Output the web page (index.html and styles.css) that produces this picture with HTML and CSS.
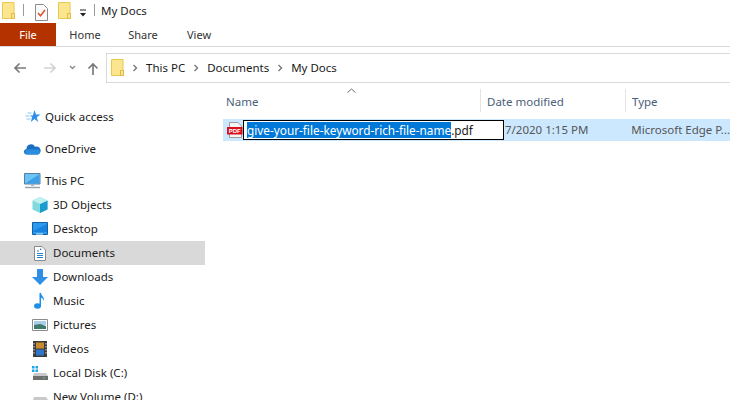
FILE: index.html
```html
<!DOCTYPE html>
<html lang="en">
<head>
<meta charset="utf-8">
<title>My Docs</title>
<link rel="stylesheet" href="styles.css">
</head>
<body>
<svg class="defs" width="0" height="0" aria-hidden="true">
  <symbol id="folder" viewBox="0 0 13 17">
    <path d="M.5.5h11.5v16H.5z" fill="#fbe58f" stroke="#e9c84f"/>
    <path d="M9.5 11.5h3v5h-3z" fill="#fbe58f" stroke="#e0b93e"/>
  </symbol>
  <symbol id="chev" viewBox="0 0 6 8">
    <path d="M1.5 1l3 3-3 3" fill="none" stroke="#777" stroke-width="1.4"/>
  </symbol>
</svg>
<div class="window">
  <header class="titlebar">
    <svg class="qat-folder" width="13" height="17"><use href="#folder"/></svg>
    <span class="qat-sep"></span>
    <svg class="qat-check" width="13" height="17" viewBox="0 0 13 17">
      <path d="M.5.5h8l4 4v12H.5z" fill="#fafafa" stroke="#8b8b8b"/>
      <path d="M3 9l2.500 2.800L10 6" fill="none" stroke="#d9542b" stroke-width="1.500"/>
    </svg>
    <svg class="qat-folder2" width="13" height="17"><use href="#folder"/></svg>
    <svg class="qat-drop" width="8" height="8" viewBox="0 0 8 8">
      <path d="M1 1h6" stroke="#222" stroke-width="1"/>
      <path d="M1 4h6L4 7.500z" fill="#222"/>
    </svg>
    <span class="qat-sep sep2"></span>
    <span class="title">My Docs</span>
  </header>
  <nav class="ribbon">
    <span class="tab file">File</span>
    <span class="tab home">Home</span>
    <span class="tab share">Share</span>
    <span class="tab view">View</span>
  </nav>
  <div class="addressrow">
    <svg class="back" width="14" height="12" viewBox="0 0 14 12"><path d="M13 6H2M6.500 1.500 2 6l4.500 4.500" fill="none" stroke="#7a7a7a" stroke-width="1.700"/></svg>
    <svg class="fwd" width="14" height="12" viewBox="0 0 14 12"><path d="M1 6h11M7.500 1.500 12 6l-4.500 4.500" fill="none" stroke="#d2d2d2" stroke-width="1.700"/></svg>
    <svg class="nav-down" width="7" height="5" viewBox="0 0 7 5"><path d="M1 1l2.500 2.500L6 1" fill="none" stroke="#8a8a8a" stroke-width="1.300"/></svg>
    <svg class="up" width="12" height="14" viewBox="0 0 12 14"><path d="M6 13V2M1.500 6.500 6 2l4.500 4.500" fill="none" stroke="#7a7a7a" stroke-width="1.700"/></svg>
    <div class="addressbox">
      <svg width="13" height="17"><use href="#folder"/></svg>
      <svg class="crumb-chev" width="6" height="8"><use href="#chev"/></svg>
      <span>This PC</span>
      <svg class="crumb-chev" width="6" height="8"><use href="#chev"/></svg>
      <span>Documents</span>
      <svg class="crumb-chev" width="6" height="8"><use href="#chev"/></svg>
      <span>My Docs</span>
    </div>
  </div>
  <div class="body">
    <aside class="sidebar">
      <ul class="tree">
        <li class="item top gap-after">
          <svg width="16" height="16" viewBox="0 0 16 16"><path d="M10 1l1.500 4.500H16l-3.700 2.800 1.400 4.700-3.700-2.900L6.300 13l1.300-4.700L5.500 6.500h2.800z" fill="#2f8fe6"/><path d="M3 4h4M1 7h4M2 10h4" stroke="#8cc4f2" stroke-width="1"/></svg>
          <span>Quick access</span>
        </li>
        <li class="item top gap-after">
          <svg width="17" height="12" viewBox="0 0 17 12"><path d="M3 11.500A2.700 2.700 0 0 1 2.500 6 4.500 4.500 0 0 1 11 3.800 3.800 3.800 0 0 1 14 11.500z" fill="#1a6fc4"/><path d="M3 11.500A2.700 2.700 0 0 1 3 6.500h9.500a2.500 2.500 0 0 1 1.500 5z" fill="#2b8fe0"/></svg>
          <span>OneDrive</span>
        </li>
        <li class="item top">
          <svg width="17" height="16" viewBox="0 0 17 16"><path d="M.5.500h15.500v10.500H.5z" fill="#6cc4f5" stroke="#5a7f9c"/><path d="M1 10.500 15 1.500v9z" fill="#3ba0e6"/><path d="M7 11h3v2H7z" fill="#aab4bc"/><path d="M1 14.500h15" stroke="#9aa4ac" stroke-width="1.500"/></svg>
          <span>This PC</span>
        </li>
        <li class="item sub">
          <svg width="16" height="16" viewBox="0 0 16 16"><path d="M8 0l7.500 3.500v9L8 16 .5 12.500v-9z" fill="#7fd9de"/><path d="M8 7v9l7.500-3.500v-9z" fill="#1d9bcf"/><path d="M8 0l7.500 3.500L8 7 .5 3.500z" fill="#bff0ef"/></svg>
          <span>3D Objects</span>
        </li>
        <li class="item sub">
          <svg width="16" height="14" viewBox="0 0 16 14"><path d="M.5.500h15v12H.5z" fill="#2a9af0" stroke="#155f9e"/><path d="M1 9l14-7v8H1z" fill="#1682e0"/><path d="M4 12h7" stroke="#dbeeff"/></svg>
          <span>Desktop</span>
        </li>
        <li class="item sub selected">
          <svg width="16" height="15" viewBox="0 0 16 15"><path d="M2.500.500h7.500l3.500 3.500v10.500h-11z" fill="#fff" stroke="#8a8a8a"/><path d="M5 5h2M5 7.500h6M5 9.500h6M5 11.500h6" stroke="#2a7fd0"/><path d="M8 2l2 2H8z" fill="#2a7fd0"/></svg>
          <span>Documents</span>
        </li>
        <li class="item sub">
          <svg width="16" height="16" viewBox="0 0 16 16"><path d="M5 0h6v8h5l-8 8-8-8h5z" fill="#2f8fe6"/></svg>
          <span>Downloads</span>
        </li>
        <li class="item sub">
          <svg width="16" height="16" viewBox="0 0 16 16"><ellipse cx="5.500" cy="13" rx="3.500" ry="2.700" fill="#1e8fe8"/><path d="M7.500 13V0h1.500c.5 3 3.500 4 3 8-.7-2-2-3-3-3.200V13z" fill="#1e8fe8"/></svg>
          <span>Music</span>
        </li>
        <li class="item sub">
          <svg width="16" height="12" viewBox="0 0 16 12"><path d="M.5.500h15v11H.5z" fill="#fff" stroke="#8c8c8c"/><path d="M2 2h12v4H2z" fill="#a9cdea"/><path d="M2 6l6-1 6 2v3H2z" fill="#3e7a6a"/></svg>
          <span>Pictures</span>
        </li>
        <li class="item sub">
          <svg width="14" height="16" viewBox="0 0 14 16"><path d="M0 0h14v16H0z" fill="#3c3c3c"/><path d="M3 1.500h8v6H3z" fill="#c98c2c"/><path d="M3 8.500h8v6H3z" fill="#2f76c8"/><path d="M1 2v12M13 2v12" stroke="#d8d8d8" stroke-width="1" stroke-dasharray="1.500 1.500"/></svg>
          <span>Videos</span>
        </li>
        <li class="item sub">
          <svg width="16" height="14" viewBox="0 0 16 14"><path d="M0 0h2.500v2.500H0zM3.500 0H6v2.500H3.500zM0 3.500h2.500V6H0zM3.500 3.500H6V6H3.500z" fill="#19a7e8"/><path d="M2 7h12l2 3H1z" fill="#c9c9c9"/><path d="M1 10h15v4H1z" fill="#6e6e6e"/><path d="M11 11.500h2v1h-2z" fill="#4fd06f"/></svg>
          <span>Local Disk (C:)</span>
        </li>
        <li class="item sub">
          <svg width="16" height="14" viewBox="0 0 16 14"><path d="M2 7h12l2 3H1z" fill="#c9c9c9"/><path d="M1 10h15v4H1z" fill="#6e6e6e"/></svg>
          <span>New Volume (D:)</span>
        </li>
      </ul>
    </aside>
    <main class="files">
      <svg class="sort" width="9" height="5" viewBox="0 0 9 5"><path d="M.5 4.500l4-3.500 4 3.500" fill="none" stroke="#6e6e6e"/></svg>
      <div class="cols">
        <span class="col c-name">Name</span>
        <span class="col c-date">Date modified</span>
        <span class="col c-type">Type</span>
      </div>
      <div class="row">
        <svg class="pdf" width="16" height="16" viewBox="0 0 16 16">
          <path d="M2.500.500h8.500l3.500 3.500v11.500h-12z" fill="#f5f5f5" stroke="#9a9a9a"/>
          <path d="M0 5h15.500v7.500H0z" fill="#d8101c"/>
          <text x="7.700" y="10.900" class="pdf-label">PDF</text>
        </svg>
        <span class="r-date">7/2020 1:15 PM</span>
        <span class="r-type">Microsoft Edge P...</span>
        <div class="rename"><span class="sel">give-your-file-keyword-rich-file-name</span><span class="ext">.pdf</span></div>
      </div>
    </main>
  </div>
</div>
</body>
</html>
```

FILE: styles.css
```css
* { box-sizing: border-box; }
html, body { margin: 0; padding: 0; }
body {
  width: 730px;
  height: 400px;
  overflow: hidden;
  background: #fff;
  color: #1a1a1a;
  font: 11.5px/16px "Noto Sans", "Open Sans", sans-serif;
}
.defs { position: absolute; }
svg { display: block; flex: none; }
.window { height: 400px; display: flex; flex-direction: column; }

.titlebar { height: 23px; display: flex; align-items: center; padding-left: 2px; }
.qat-folder { margin-top: -2px; }
.qat-sep { width: 1px; height: 12px; background: #9a9a9a; margin: -3px 0 0 8px; }
.qat-check { margin: 1px 0 0 11px; }
.qat-folder2 { margin: -2px 0 0 10px; }
.qat-drop { margin: 2px 0 0 8px; }
.sep2 { margin-left: 7px; }
.title { margin: -2px 0 0 6px; }

.ribbon { height: 24px; display: flex; align-items: center; border-bottom: 1px solid #dadada; font-size: 11px; color: #333; }
.tab { height: 23px; line-height: 23px; text-align: center; }
.file { width: 56px; background: #b33200; color: #fff; }
.home { width: 58px; }
.share { width: 58px; }
.view { width: 54px; }

.addressrow { height: 35px; display: flex; align-items: center; padding-top: 6px; }
.back { margin-left: 13px; }
.fwd { margin-left: 16px; }
.nav-down { margin-left: 12px; }
.up { margin-left: 11px; margin-top: 2px; }
.addressbox {
  width: 625px;
  height: 30px;
  margin-left: 7px;
  border: 1px solid #d9d9d9;
  border-right: 0;
  display: flex;
  align-items: center;
  padding-left: 4px;
}
.crumb-chev { margin: 0 8px; }

.body { flex: 1; display: flex; min-height: 0; }
.sidebar { width: 215px; flex: none; overflow: hidden; padding-top: 23px; }
.tree { list-style: none; margin: 0; padding: 0; }
.item { width: 205px; height: 24px; display: flex; align-items: center; }
.item.top { padding-left: 24px; gap: 4px; }
.item.top svg { width: 17px; }
.item.sub { padding-left: 32px; gap: 5px; }
.item.sub svg { width: 16px; }
.gap-after { margin-bottom: 8px; }
.selected { background: #d9d9d9; }

.files { flex: 1; position: relative; min-width: 0; }
.sort { position: absolute; left: 132px; top: 6px; }
.cols { height: 30px; display: flex; align-items: stretch; padding-top: 4px; color: #4c607a; }
.col { padding-left: 6px; line-height: 26px; border-right: 1px solid #e4e4e4; margin-top: 3px; height: 23px; }
.c-name { width: 261px; margin-left: 5px; }
.c-date { width: 145px; }
.c-type { flex: 1; border-right: 0; }

.row {
  position: relative;
  height: 22px;
  margin: 7px 0 0 8px;
  width: 507px;
  background: #cce8ff;
  color: #555;
  display: flex;
  align-items: center;
}
.pdf { margin-left: 4px; }
.pdf-label { font: bold 6px "Liberation Sans", sans-serif; fill: #fff; text-anchor: middle; }
.r-date { margin-left: 262px; white-space: nowrap; }
.r-type { margin-left: 43px; white-space: nowrap; }
.rename {
  position: absolute;
  left: 20px;
  top: 1px;
  width: 261px;
  height: 20px;
  background: #fff;
  border: 1px solid #000;
  display: flex;
  align-items: center;
  padding-left: 3px;
  color: #1a1a1a;
  white-space: nowrap;
  font-size: 11.8px;
}
.sel { background: #0078d7; color: #fff; height: 16px; line-height: 16px; }
```
